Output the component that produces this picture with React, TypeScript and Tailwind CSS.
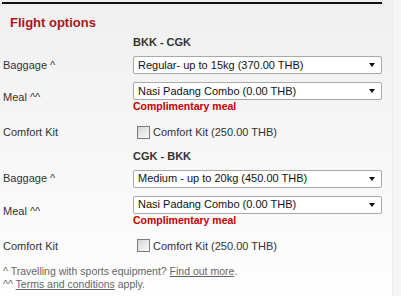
const font = "font-['Liberation_Sans',Arial,sans-serif]";

function SelectBox({ value }: { value: string }) {
  return (
    <div className="flex h-[18px] w-[249px] items-center justify-between rounded-[2px] border border-[#a9a9a9] bg-white pl-[4px] pr-[6px] text-[11px] text-[#111]">
      <span>{value}</span>
      <span className="h-0 w-0 border-x-[3.5px] border-t-[4px] border-x-transparent border-t-[#111]" />
    </div>
  );
}

function Row({ label, children, className }: { label: string; children: React.ReactNode; className?: string }) {
  return (
    <div className={`flex items-center ${className ?? ''}`}>
      <div className="w-[133px] pl-[3px] text-[11px] text-[#333]">{label}</div>
      <div>{children}</div>
    </div>
  );
}

function ComfortKit({ className }: { className?: string }) {
  return (
    <Row label="Comfort Kit" className={className}>
      <div className="flex h-[13px] items-center pl-[4px] text-[11px] text-[#333]">
        <span className="mr-[3px] h-[13px] w-[13px] border border-[#7d7d7d] bg-gradient-to-br from-[#d4d4d4] to-[#fbfbfb]" />
        Comfort Kit (250.00 THB)
      </div>
    </Row>
  );
}

function Leg({ route, baggage, first }: { route: string; baggage: string; first?: boolean }) {
  return (
    <div>
      <div className={`${first ? 'mt-[4px]' : 'mt-[8px]'} h-[14px] pl-[133px] text-[11px] font-bold leading-[14px] text-[#333]`}>
        {route}
      </div>
      <Row label="Baggage ^" className="mt-[7px]">
        <SelectBox value={baggage} />
      </Row>
      <Row label="Meal ^^" className="mt-[8px]">
        <SelectBox value="Nasi Padang Combo (0.00 THB)" />
        <div className="h-[13px] text-[10.5px] font-bold leading-[13px] text-[#c40000]">Complimentary meal</div>
      </Row>
      <ComfortKit className="mt-[11px]" />
    </div>
  );
}

export default function App() {
  return (
    <div className={`relative h-[296px] w-[401px] overflow-hidden bg-gradient-to-b from-[#f0f0f0] to-[#fefefe] ${font}`}>
      <div className="absolute right-0 top-0 h-full w-[9px] border-l border-[#ececec] bg-[#f6f6f6]" />
      <div className="relative">
        <div className="ml-[2px] mt-[2px] h-[2px] w-[380px] bg-[#111]" />
        <h2 className="ml-[10px] mt-[11px] h-[16px] text-[13px] font-bold leading-[16px] text-[#b3101c]">Flight options</h2>
        <Leg route="BKK - CGK" baggage="Regular- up to 15kg (370.00 THB)" first />
        <Leg route="CGK - BKK" baggage="Medium - up to 20kg (450.00 THB)" />
        <div className="mt-[11px] pl-[3px] text-[10.5px] leading-[13px] text-[#666]">
          <p>
            ^ Travelling with sports equipment? <span className="underline">Find out more</span>.
          </p>
          <p>
            ^^ <span className="underline">Terms and conditions</span> apply.
          </p>
        </div>
      </div>
    </div>
  );
}
